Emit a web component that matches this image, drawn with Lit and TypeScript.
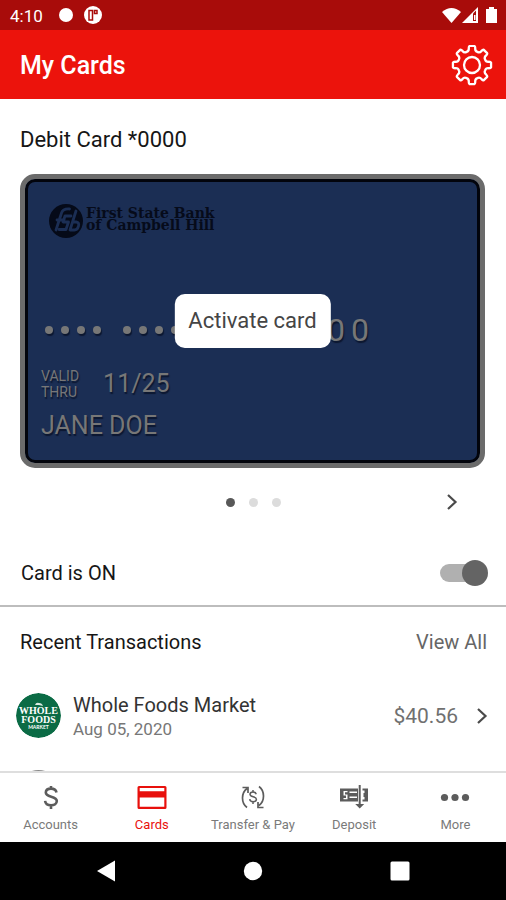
import { LitElement, html, css, svg } from "lit";
import { customElement, state } from "lit/decorators.js";
import { classMap } from "lit/directives/class-map.js";

const chevron = html`<svg class="chevron" viewBox="0 0 12 18" aria-hidden="true">
  <path d="M2 2l7.500 7L2 16" fill="none" stroke="currentColor" stroke-width="2.200" />
</svg>`;

function gearPath(): string {
  const pts: string[] = [];
  const point = (deg: number, r: number) => {
    const a = (deg * Math.PI) / 180;
    return `${(21 + r * Math.cos(a)).toFixed(2)} ${(21 + r * Math.sin(a)).toFixed(2)}`;
  };
  for (let i = 0; i < 8; i++) {
    const c = i * 45 - 90;
    pts.push(`${i === 0 ? "M" : "L"}${point(c - 7, 19.2)}`);
    pts.push(`L${point(c + 7, 19.2)}`);
    pts.push(`Q${point(c + 10, 19)} ${point(c + 11, 17)}`);
    pts.push(`Q${point(c + 12, 14.2)} ${point(c + 22.5, 14.2)}`);
    pts.push(`Q${point(c + 33, 14.2)} ${point(c + 34, 17)}`);
    pts.push(`Q${point(c + 35, 19)} ${point(c + 38, 19.2)}`);
  }
  return pts.join("") + "Z";
}

const tabs = [
  {
    label: "Accounts",
    icon: svg`<path d="M21.500 9.500c-.5-2.600-2.600-3.900-5.500-3.900-3 0-5.200 1.500-5.200 3.900 0 5.600 11 2.800 11 8.600 0 2.600-2.400 4.200-5.700 4.200-3.400 0-5.700-1.500-6-4.500M16 3v3M16 22v4" fill="none" stroke="currentColor" stroke-width="2.600"/>`,
  },
  {
    label: "Cards",
    icon: svg`<path fill-rule="evenodd" d="M3 3h26q1.500 0 1.500 1.500v20q0 1.500-1.500 1.500H3q-1.500 0-1.500-1.500v-20Q1.500 3 3 3zM3.700 5v3.200h24.600V5zM3.700 14.500v9.300h24.600v-9.300z" fill="currentColor"/>`,
  },
  {
    label: "Transfer & Pay",
    icon: svg`<g fill="none" stroke="currentColor" stroke-width="1.700">
      <path d="M10 24.500C4 20 4 10 10 5.500M5.500 4.500h5.500V10M22 3.500c6 4.500 6 14.500 0 19M26.500 24.500H21V19"/>
      <path d="M19.200 11.200c-.4-1.500-1.500-2.200-3.200-2.200s-3 .9-3 2.300c0 3.300 6.400 1.700 6.400 5 0 1.500-1.400 2.400-3.300 2.400s-3.200-.8-3.400-2.500M16 7v2M16 19v2" stroke-width="1.500"/></g>`,
  },
  {
    label: "Deposit",
    icon: svg`<path fill-rule="evenodd" fill="currentColor" d="M2 5.500h18v13H2zM5.500 8v4.500h2.500V15h-2.500v1.200h4V11.500H7V9.200h2.500V8zM11.500 8.500V10H19V8.500zM11.500 13.500V15H19v-1.500z"/>
      <path fill="currentColor" d="M24.500 5.500H30v13h-5.500v-2H26.500V14h-1v-4h1V7.500h-2zM20.700 2h2v19h3.500l-4.500 4.500L17.200 21h3.500z"/>`,
  },
  {
    label: "More",
    icon: svg`<g fill="currentColor"><circle cx="5.500" cy="14.500" r="3.600"/><circle cx="16" cy="14.500" r="3.600"/><circle cx="26.500" cy="14.500" r="3.600"/></g>`,
  },
];

@customElement("app-root")
export class AppRoot extends LitElement {
  @state() private active = "Cards";
  @state() private cardOn = true;

  static styles = css`
    :host {
      display: flex;
      flex-direction: column;
      height: 100vh;
      overflow: hidden;
      background: #fff;
      color: #161616;
      font-family: Roboto, sans-serif;
      font-size: 20px;
      line-height: 24px;
    }
    * {
      box-sizing: border-box;
    }
    button {
      border: 0;
      padding: 0;
      margin: 0;
      background: none;
      font: inherit;
      color: inherit;
    }
    h1,
    h2,
    h3,
    p,
    ul {
      margin: 0;
      padding: 0;
      list-style: none;
      font-size: inherit;
      font-weight: 400;
    }
    svg {
      display: block;
      flex: none;
    }
    .status {
      display: flex;
      align-items: center;
      flex: none;
      height: 30px;
      padding: 2px 8px 0 10px;
      background: #a80c0a;
      color: #fff;
      font-size: 17px;
      line-height: 20px;
    }
    .status-icons {
      width: 46px;
      height: 20px;
      margin-left: 15px;
    }
    .system {
      width: 56px;
      height: 20px;
      margin-left: auto;
    }
    .header {
      display: flex;
      align-items: center;
      justify-content: space-between;
      flex: none;
      height: 69px;
      padding: 2px 13px 0 20px;
      background: #ec130c;
      color: #fff;
    }
    .header h1 {
      font-size: 25px;
      line-height: 32px;
      font-weight: 500;
    }
    .gear {
      width: 42px;
      height: 42px;
    }
    .content {
      flex: 1;
      min-height: 0;
      overflow-y: auto;
      scrollbar-width: none;
    }
    .card-title {
      padding: 28px 20px 21px;
      font-size: 22px;
      line-height: 26px;
    }
    .card {
      position: relative;
      margin: 0 21px 0 20px;
      padding: 24px 20px 21px 13px;
      border: 5px solid #6b6b6b;
      border-radius: 15px;
      background: #1b2e54;
      box-shadow: inset 0 0 0 3px #02040c;
      color: #777;
      text-shadow: 1px 2px 1px #0c1730;
    }
    .bank {
      display: flex;
      gap: 2px;
      padding-left: 10px;
      color: #060b1a;
      font-family: "DejaVu Serif", serif;
      font-size: 14px;
      line-height: 12px;
      text-shadow: none;
    }
    .bank svg {
      width: 36px;
      height: 36px;
    }
    .bank p {
      padding-top: 4px;
      font-weight: 700;
    }
    .number {
      display: flex;
      align-items: center;
      gap: 22px;
      height: 36px;
      margin: 73px 0 20px;
      padding-left: 7px;
      font-size: 32px;
      line-height: 36px;
    }
    .group {
      display: flex;
      gap: 8px;
    }
    .digits {
      gap: 6px;
    }
    .dot {
      width: 8px;
      height: 8px;
      border-radius: 50%;
      background: #777;
      box-shadow: 1px 2px 1px #0c1730;
    }
    .valid {
      display: flex;
      align-items: center;
      gap: 24px;
      padding-left: 3px;
      font-size: 14px;
      line-height: 16px;
    }
    .date {
      font-size: 25px;
      line-height: 32px;
    }
    .name {
      padding: 10px 0 0 3px;
      font-size: 25px;
      line-height: 32px;
    }
    .activate {
      position: absolute;
      top: 50%;
      left: 50%;
      transform: translate(-50%, -50%);
      padding: 14px;
      border-radius: 10px;
      background: #fff;
      color: #454545;
      font-size: 22px;
      line-height: 26px;
      white-space: nowrap;
    }
    .pager {
      display: grid;
      grid-template-columns: 1fr auto 1fr;
      align-items: center;
      height: 68px;
      padding: 0 48px;
    }
    .pages {
      grid-column: 2;
      display: flex;
      gap: 14px;
    }
    .page {
      width: 9px;
      height: 9px;
      border-radius: 50%;
      background: #dcdcdc;
    }
    .current {
      background: #585858;
    }
    .pager button {
      justify-self: end;
    }
    .chevron {
      width: 12px;
      height: 18px;
      color: #4a4a4a;
    }
    .power {
      display: flex;
      align-items: center;
      justify-content: space-between;
      height: 71px;
      padding: 4px 18px 0 21px;
      border-bottom: 2px solid #bdbdbd;
    }
    .switch {
      appearance: none;
      display: grid;
      align-items: center;
      width: 48px;
      height: 26px;
      margin: 0;
    }
    .switch::before,
    .switch::after {
      content: "";
      grid-area: 1 / 1;
    }
    .switch::before {
      width: 42px;
      height: 18px;
      border-radius: 9px;
      background: #b0b0b0;
    }
    .switch::after {
      width: 26px;
      height: 26px;
      border-radius: 50%;
      background: #646464;
    }
    .switch:checked::after {
      justify-self: end;
    }
    .recent {
      display: flex;
      align-items: center;
      justify-content: space-between;
      height: 70px;
      padding: 0 19px 0 20px;
    }
    .recent a {
      color: #666;
      text-decoration: none;
    }
    .row {
      display: flex;
      align-items: center;
      gap: 12px;
      height: 77px;
      padding: 0 18px 0 16px;
    }
    .avatar {
      width: 45px;
      height: 45px;
      border-radius: 50%;
    }
    .plain {
      background: #8a8a8a;
    }
    .merchant {
      flex: 1;
      padding-top: 2px;
      color: #333;
    }
    .when {
      color: #777;
      font-size: 17px;
    }
    .amount {
      padding-right: 6px;
      color: #707070;
      font-size: 21px;
    }
    .tabs {
      display: grid;
      grid-template-columns: repeat(5, 1fr);
      flex: none;
      height: 71px;
      border-top: 2px solid #dedede;
      background: #fff;
    }
    .tab {
      display: flex;
      flex-direction: column;
      align-items: center;
      gap: 5px;
      padding-top: 10px;
      color: #7a7a7a;
      font-size: 13px;
      line-height: 16px;
      white-space: nowrap;
    }
    .tab svg {
      width: 32px;
      height: 29px;
      color: #5c5c5c;
    }
    .on,
    .on svg {
      color: #e8100c;
    }
    .system-nav {
      display: flex;
      justify-content: space-around;
      align-items: center;
      flex: none;
      height: 58px;
      padding: 0 33px;
      background: #000;
    }
    .system-nav svg {
      width: 24px;
      height: 24px;
    }
  `;

  private dots() {
    return html`<span class="group">${[0, 1, 2, 3].map(() => html`<span class="dot"></span>`)}</span>`;
  }

  render() {
    return html`
      <div class="status">
        <span>4:10</span>
        <svg class="status-icons" viewBox="0 0 46 20" aria-hidden="true">
          <circle cx="8" cy="9" r="7" fill="#fff" />
          <circle cx="35" cy="9" r="9" fill="#fff" />
          <path d="M31 14V4.500h3.500V14zM36.500 4.500h2.500v3h-2.500z" fill="none" stroke="#a80c0a" stroke-width="1.500" />
        </svg>
        <svg class="system" viewBox="0 0 56 20" aria-hidden="true">
          <path d="M0 6q9.500-8 19 0L9.500 17z" fill="#fff" />
          <path d="M20 17L36 1v16z" fill="#fff" />
          <path d="M31 7.500V15h3V4.500z" fill="#a80c0a" />
          <path d="M32 9h1.500v5H32z" fill="#fff" />
          <path d="M44 3h3V1h5v2h3v14H44z" fill="#fff" />
        </svg>
      </div>
      <header class="header">
        <h1>My Cards</h1>
        <button aria-label="Settings">
          <svg class="gear" viewBox="0 1 42 42" aria-hidden="true">
            <path d=${gearPath()} fill="none" stroke="#fff" stroke-width="2.300" stroke-linejoin="round" />
            <circle cx="21" cy="21" r="8" fill="none" stroke="#fff" stroke-width="2.300" />
          </svg>
        </button>
      </header>
      <main class="content">
        <h2 class="card-title">Debit Card *0000</h2>
        <section class="card">
          <div class="bank">
            <svg viewBox="0 0 36 36" aria-hidden="true">
              <circle cx="18" cy="18" r="17" fill="#050a18" />
              <g fill="none" stroke="#1b2e54" stroke-width="2.800" stroke-linejoin="round" stroke-linecap="round">
                <path d="M8 27l5.500-17q1.500-4.500 8-4M9 17h7" />
                <path d="M23 13h-6l-2 6h5.500l-2.500 7.500H11" />
                <path d="M28 8l-6 19h4.500q3 0 4-3.800t-2.200-4.200h-3.500" />
              </g>
            </svg>
            <p>First State Bank<br />of Campbell Hill</p>
          </div>
          <div class="number">
            ${this.dots()}${this.dots()}${this.dots()}
            <span class="group digits">${[..."0000"].map((d) => html`<span>${d}</span>`)}</span>
          </div>
          <div class="valid">
            <span>VALID<br />THRU</span>
            <span class="date">11/25</span>
          </div>
          <p class="name">JANE DOE</p>
          <button class="activate">Activate card</button>
        </section>
        <div class="pager">
          <div class="pages">
            <span class="page current"></span><span class="page"></span><span class="page"></span>
          </div>
          <button aria-label="Next card">${chevron}</button>
        </div>
        <div class="power">
          <label for="power">Card is ON</label>
          <input
            id="power"
            class="switch"
            type="checkbox"
            .checked=${this.cardOn}
            @change=${() => (this.cardOn = !this.cardOn)}
          />
        </div>
        <div class="recent">
          <h2>Recent Transactions</h2>
          <a href="#transactions">View All</a>
        </div>
        <ul>
          <li class="row">
            <svg class="avatar" viewBox="0 0 45 45">
              <circle cx="22.500" cy="22.500" r="22.500" fill="#0b6b45" />
              <path d="M19 12q1-3 4-2 3 0 4 3l-4-1z" fill="#dcebe3" />
              <g fill="#fff" text-anchor="middle" font-family="Liberation Serif, serif" font-weight="700">
                <text x="22.500" y="21" font-size="10">WHOLE</text>
                <text x="22.500" y="30" font-size="10">FOODS</text>
                <text x="22.500" y="36" font-size="5" font-family="Lato, sans-serif">MARKET</text>
              </g>
            </svg>
            <div class="merchant">
              <h3>Whole Foods Market</h3>
              <p class="when">Aug 05, 2020</p>
            </div>
            <span class="amount">$40.56</span>
            ${chevron}
          </li>
          <li class="row"><span class="avatar plain"></span></li>
        </ul>
      </main>
      <nav class="tabs">
        ${tabs.map(
          (t) => html`<button
            class=${classMap({ tab: true, on: this.active === t.label })}
            @click=${() => (this.active = t.label)}
          >
            <svg viewBox="0 0 32 29" aria-hidden="true">${t.icon}</svg>
            <span>${t.label}</span>
          </button>`
        )}
      </nav>
      <div class="system-nav">
        <button aria-label="Back">
          <svg viewBox="0 0 24 24"><path d="M3 12L21 1.500v21z" fill="#fff" /></svg>
        </button>
        <button aria-label="Home">
          <svg viewBox="0 0 24 24"><circle cx="12" cy="12" r="9.200" fill="#fff" /></svg>
        </button>
        <button aria-label="Overview">
          <svg viewBox="0 0 24 24"><rect x="2.500" y="2.500" width="19" height="19" rx="1.500" fill="#fff" /></svg>
        </button>
      </div>
    `;
  }
}
